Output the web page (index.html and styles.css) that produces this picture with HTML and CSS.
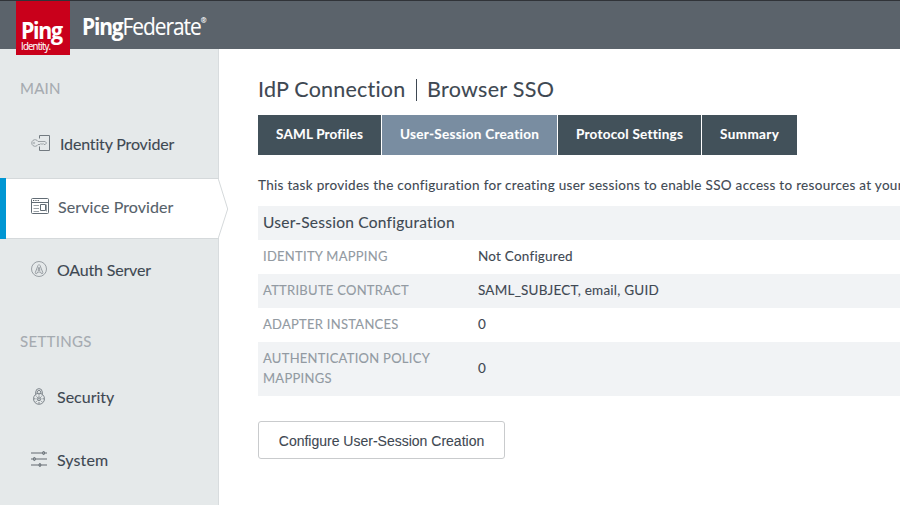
FILE: index.html
```html
<!DOCTYPE html>
<html lang="en">
<head>
<meta charset="utf-8">
<title>PingFederate</title>
<link rel="stylesheet" href="styles.css">
</head>
<body>
<header class="topbar">
  <div class="logo"><span class="logo-ping">Ping</span><span class="logo-identity">Identity.</span></div>
  <div class="product"><b>Ping</b><span class="product-fed">Federate</span><sup>®</sup></div>
</header>
<div class="layout">
  <nav class="sidebar">
    <h2 class="group">MAIN</h2>
    <a class="item item-idp">
      <svg class="icon" width="20" height="18" viewBox="0 0 20 18"><path d="M8.500 4.500v-3h10v15h-10v-4" fill="none" stroke="#727a80"/><path d="M7 7.500a3.300 3.300 0 1 0 0 3h2l1-1 1 1 1-1 1 1h1.200l1.300-1.500-1.300-1.500z" fill="none" stroke="#92999d" stroke-width=".9"/><circle cx="3" cy="9" r=".8" fill="none" stroke="#92999d" stroke-width=".6"/></svg>
      <span>Identity Provider</span>
    </a>
    <a class="item item-active">
      <svg class="icon" width="18" height="18" viewBox="0 0 18 18"><path d="M.5 2.500q0-1 1-1h15q1 0 1 1v13q0 1-1 1h-15q-1 0-1-1zM.5 5.500h17M9.500 7.500h5v6h-5z" fill="none" stroke="#626c75"/><path d="M2 3.500h1.300M4.300 3.500h1.300M6.600 3.500h1.300" stroke="#505a63"/><path d="M2.500 8.500H8M2.500 11.500H8M2.500 14.500H8M15.500 7.500v7" stroke="#9aa1a6"/></svg>
      <span>Service Provider</span>
      <svg class="arrow" width="11" height="61" viewBox="0 0 11 61"><path d="M0 0L.5 1.500 9.700 31 .5 59.500 0 61z" fill="#fff"/><path d="M.5 0v1.500L9.700 31 .5 59.500V61" fill="none" stroke="#d5d9db"/></svg>
    </a>
    <a class="item item-oauth">
      <svg class="icon" width="18" height="18" viewBox="0 0 18 18"><g fill="none" stroke="#858c92" stroke-width=".8"><circle cx="8" cy="9" r="7.500"/><path d="M4.300 12.500L7 5.500Q8 3.500 9 5.500l2.800 7q.1 1.300-1 1.200-.8 0-1.200-1.700H6.500Q6.300 13.700 5.300 13.700q-1.100 0-1-1.200zM7 10.300h2L8 7.200z"/></g></svg>
      <span>OAuth Server</span>
    </a>
    <h2 class="group group-settings">SETTINGS</h2>
    <a class="item item-security">
      <svg class="icon" width="18" height="18" viewBox="0 0 18 18"><g fill="none" stroke="#747c82" stroke-width=".9"><circle cx="8" cy="10.800" r="5.500"/><circle cx="8" cy="10.800" r="1.900"/><circle cx="8" cy="10.800" r=".5"/><path d="M4.700 6.300V4Q5 .6 8 .6T11.300 4v2.300M6.200 5.500V4Q6.500 2.400 8 2.400T9.800 4v1.500M8 6v1.500M8 14v1.800M3 10.800h1.500M11.500 10.800H13M4.700 7.500l.9.900M11.300 7.500l-.9.900M4.700 14.100l.9-.9M11.300 14.100l-.9-.9"/></g></svg>
      <span>Security</span>
    </a>
    <a class="item item-system">
      <svg class="icon" width="18" height="18" viewBox="0 0 18 18"><path d="M0 2h16M0 8h16M0 14h16" stroke="#a4a9ad" stroke-width="2"/><g fill="#a4a9ad" stroke="#60696f" stroke-width=".9"><rect x="11.700" y=".5" width="1.800" height="3" rx=".8"/><rect x="2.500" y="6.500" width="1.800" height="3" rx=".8"/><rect x="8.100" y="12.500" width="1.600" height="3" rx=".8"/></g></svg>
      <span>System</span>
    </a>
  </nav>
  <main class="content">
    <h1 class="title"><span class="title-a">IdP Connection</span><i class="divider"></i><span class="title-b">Browser SSO</span></h1>
    <div class="tabs">
      <a class="tab tab-profiles"><span>SAML Profiles</span></a>
      <a class="tab tab-session"><span>User-Session Creation</span></a>
      <a class="tab tab-protocol"><span>Protocol Settings</span></a>
      <a class="tab tab-summary"><span>Summary</span></a>
    </div>
    <p class="intro">This task provides the configuration for creating user sessions to enable SSO access to resources at your</p>
    <section class="summary">
      <h3 class="heading"><span>User-Session Configuration</span></h3>
      <div class="row"><span class="label">IDENTITY MAPPING</span><span class="value">Not Configured</span></div>
      <div class="row shaded"><span class="label">ATTRIBUTE CONTRACT</span><span class="value value-attrs">SAML_SUBJECT, email, GUID</span></div>
      <div class="row"><span class="label">ADAPTER INSTANCES</span><span class="value">0</span></div>
      <div class="row shaded tall"><span class="label">AUTHENTICATION POLICY MAPPINGS</span><span class="value">0</span></div>
    </section>
    <button class="configure">Configure User-Session Creation</button>
  </main>
</div>
</body>
</html>
```
FILE: styles.css
```css
* { box-sizing: border-box; }
body {
  margin: 0;
  height: 505px;
  overflow: hidden;
  background: #fff;
  color: #3e4852;
  font-family: Lato, "Liberation Sans", sans-serif;
  -webkit-text-stroke: .1px;
}
h1, h2, h3, p { margin: 0; font-weight: 400; }
svg { display: block; flex: none; }

.topbar {
  display: flex;
  height: 49px;
  padding-left: 16px;
  background: #5b636b;
  border-top: 1px solid #303338;
}
.logo {
  position: relative;
  z-index: 1;
  width: 54px;
  height: 54px;
  padding: 16px 0 0 5px;
  background: #c9001b;
  color: #fff;
  font-family: "Open Sans", sans-serif;
}
.logo span { display: block; white-space: nowrap; transform-origin: 0 50%; }
.logo-ping { font-size: 24px; line-height: 26px; font-weight: 700; letter-spacing: -1.5px; transform: scaleX(.89); }
.logo-identity { margin-top: -3px; font-size: 11px; line-height: 12px; letter-spacing: -.9px; transform: scaleX(.87); }
.product {
  display: flex;
  margin-left: 12px;
  color: #fff;
  font: 24px/50px "Open Sans", sans-serif;
  letter-spacing: -1.2px;
  transform: scaleX(.87);
  transform-origin: 0 50%;
}
.product b { letter-spacing: -1.3px; }
.product-fed { letter-spacing: -1.15px; }
.product sup { font-size: 8px; line-height: 38px; }

.layout { display: flex; height: 456px; }
.sidebar {
  flex: none;
  width: 219px;
  padding-top: 27px;
  background: #e5e9ea;
  border-right: 1px solid #d8dcde;
}
.group {
  height: 24px;
  padding-left: 20px;
  color: #a5abb1;
  font-size: 15px;
  line-height: 24px;
  letter-spacing: .2px;
}
.group-settings { margin-top: 27px; letter-spacing: .3px; }
.item {
  position: relative;
  display: flex;
  align-items: center;
  height: 61px;
  margin-bottom: 2px;
  padding-left: 31px;
  font-size: 16px;
}
.item span { padding-bottom: 5px; }
.icon { margin: 0 8px 3px 0; }
.item-idp { margin-top: 15px; letter-spacing: -.16px; }
.item-idp .icon { margin: 0 9px 5px 0; }
.item-active {
  width: 218px;
  padding-left: 25px;
  background: #fff;
  border-left: 6px solid #0096d3;
  box-shadow: inset 0 1px #d5d9db, inset 0 -1px #d5d9db;
  color: #56616a;
  letter-spacing: .08px;
}
.item-active .icon { margin: 0 9px 5px 0; }
.item-oauth { letter-spacing: -.18px; }
.item-oauth .icon { margin-bottom: 5px; }
.item-system { letter-spacing: .1px; }
.arrow { position: absolute; left: 212px; top: 0; }
.item-security { margin-top: 15px; }

.content { flex: none; width: 720px; padding: 25px 0 0 39px; }
.title {
  display: flex;
  align-items: center;
  height: 30px;
  font-size: 21.5px;
  line-height: 30px;
  letter-spacing: .22px;
  white-space: nowrap;
}
.title-a { width: 158px; }
.title-b { letter-spacing: .3px; }
.divider { width: 1px; height: 22px; margin: 2px 10px 0 0; background: #3e4852; }
.tabs { display: flex; gap: 1px; height: 40px; margin-top: 11px; }
.tab {
  padding-left: 18px;
  background: #42515a;
  color: #fff;
  font-size: 13.5px;
  font-weight: 700;
  line-height: 39px;
  letter-spacing: .25px;
  white-space: nowrap;
}
.tab-profiles { width: 123px; letter-spacing: .18px; }
.tab-session { width: 175px; background: #798da1; letter-spacing: .3px; }
.tab-protocol { width: 143px; }
.tab-summary { width: 95px; letter-spacing: .4px; }
.intro { margin-top: 19px; font-size: 13.5px; line-height: 22px; letter-spacing: .3px; white-space: nowrap; }
.summary { margin-top: 10px; font-size: 13.5px; }
.heading {
  height: 34px;
  padding-left: 5px;
  background: #f1f3f5;
  font-size: 15.5px;
  line-height: 32px;
  letter-spacing: .25px;
}
.row { display: flex; align-items: center; height: 34px; padding: 0 0 2px 5px; line-height: 20px; }
.shaded { background: #f1f3f5; }
.tall { height: 54px; }
.label { width: 215px; padding-right: 35px; color: #929aa2; font-size: 13px; letter-spacing: .27px; }
.value { letter-spacing: .22px; }
.configure {
  display: block;
  width: 247px;
  height: 38px;
  margin-top: 25px;
  padding: 2px 0 0;
  border: 1px solid #c9cbcd;
  border-radius: 3px;
  background: #fff;
  color: #3e4852;
  font: 14px/20px "Liberation Sans", sans-serif;
}
```
